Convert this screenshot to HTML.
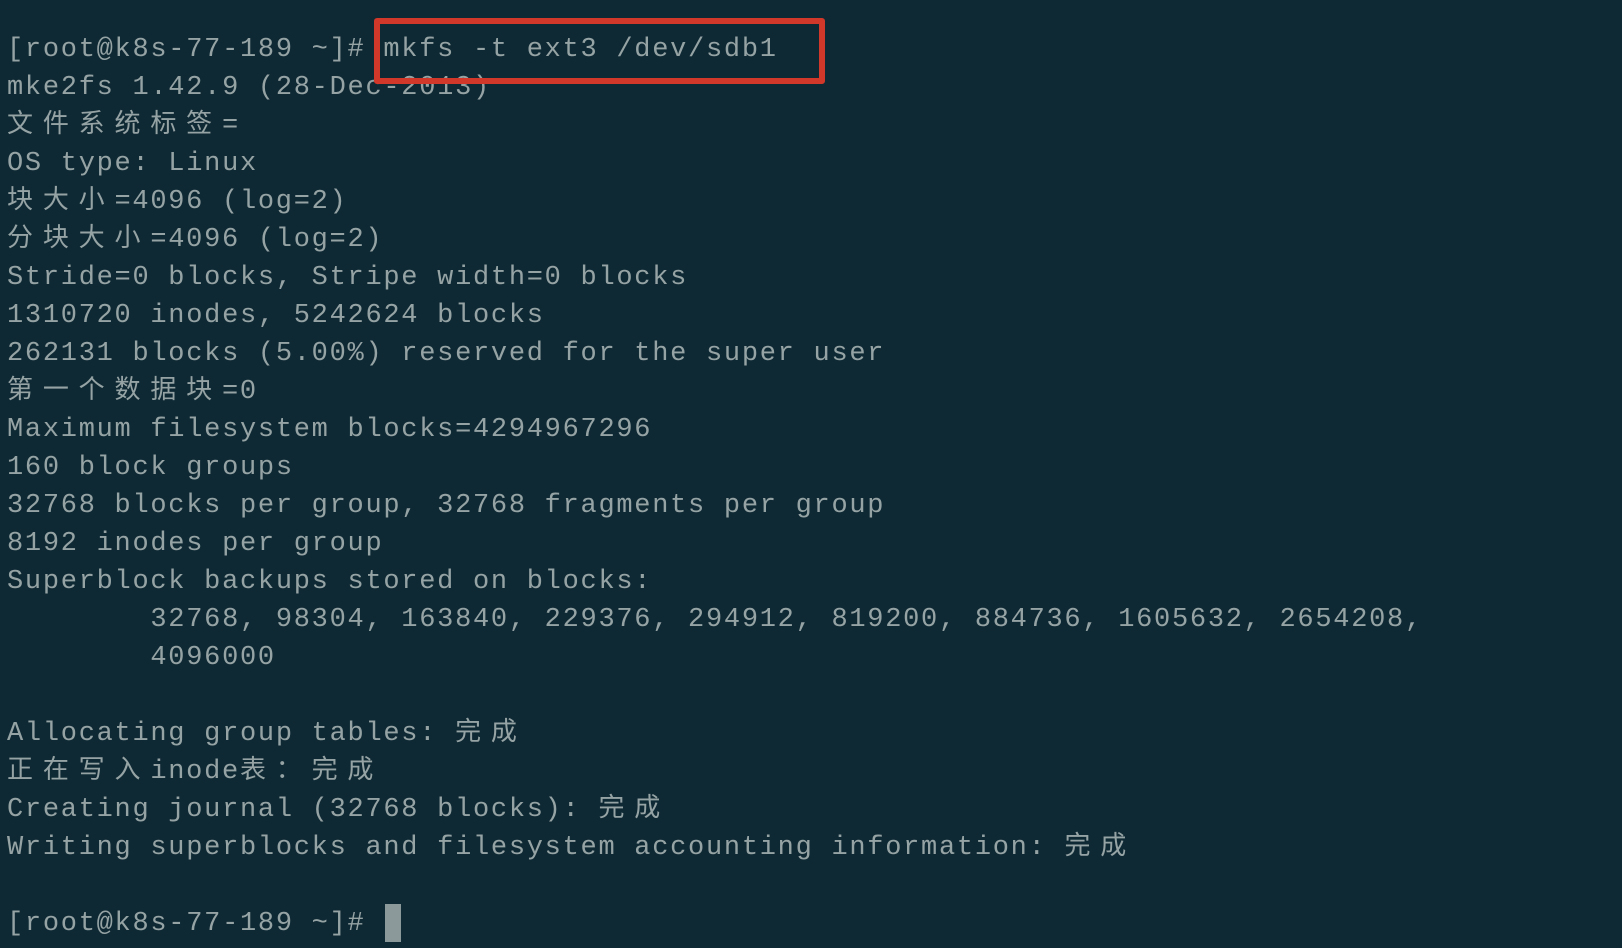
<!DOCTYPE html>
<html><head><meta charset="utf-8"><style>
html,body{margin:0;padding:0;}
body{width:1622px;height:948px;background:#0f2934;overflow:hidden;position:relative;}
pre{margin:0;position:absolute;left:7px;top:31px;font-family:"Liberation Mono","Noto Sans CJK SC",monospace;font-size:27px;letter-spacing:1.72px;line-height:38px;color:#95a3a4;white-space:pre;}
.c{display:inline-block;width:35.84px;letter-spacing:0;text-align:left;font-family:"Noto Sans CJK SC",sans-serif;font-size:26px;line-height:20px;}
.box{position:absolute;left:374px;top:18px;width:439px;height:54px;border:6px solid #d2382a;border-radius:3px;}
.cur{position:absolute;left:385px;top:904px;width:16px;height:38px;background:#8b999b;}
</style></head><body>
<pre>[root@k8s-77-189 ~]# mkfs -t ext3 /dev/sdb1
mke2fs 1.42.9 (28-Dec-2013)
<span class="c">文</span><span class="c">件</span><span class="c">系</span><span class="c">统</span><span class="c">标</span><span class="c">签</span>=
OS type: Linux
<span class="c">块</span><span class="c">大</span><span class="c">小</span>=4096 (log=2)
<span class="c">分</span><span class="c">块</span><span class="c">大</span><span class="c">小</span>=4096 (log=2)
Stride=0 blocks, Stripe width=0 blocks
1310720 inodes, 5242624 blocks
262131 blocks (5.00%) reserved for the super user
<span class="c">第</span><span class="c">一</span><span class="c">个</span><span class="c">数</span><span class="c">据</span><span class="c">块</span>=0
Maximum filesystem blocks=4294967296
160 block groups
32768 blocks per group, 32768 fragments per group
8192 inodes per group
Superblock backups stored on blocks:
        32768, 98304, 163840, 229376, 294912, 819200, 884736, 1605632, 2654208,
        4096000

Allocating group tables: <span class="c">完</span><span class="c">成</span>
<span class="c">正</span><span class="c">在</span><span class="c">写</span><span class="c">入</span>inode<span class="c">表</span><span class="c">：</span><span class="c">完</span><span class="c">成</span>
Creating journal (32768 blocks): <span class="c">完</span><span class="c">成</span>
Writing superblocks and filesystem accounting information: <span class="c">完</span><span class="c">成</span>

[root@k8s-77-189 ~]# </pre>
<div class="box"></div>
<div class="cur"></div>
</body></html>
